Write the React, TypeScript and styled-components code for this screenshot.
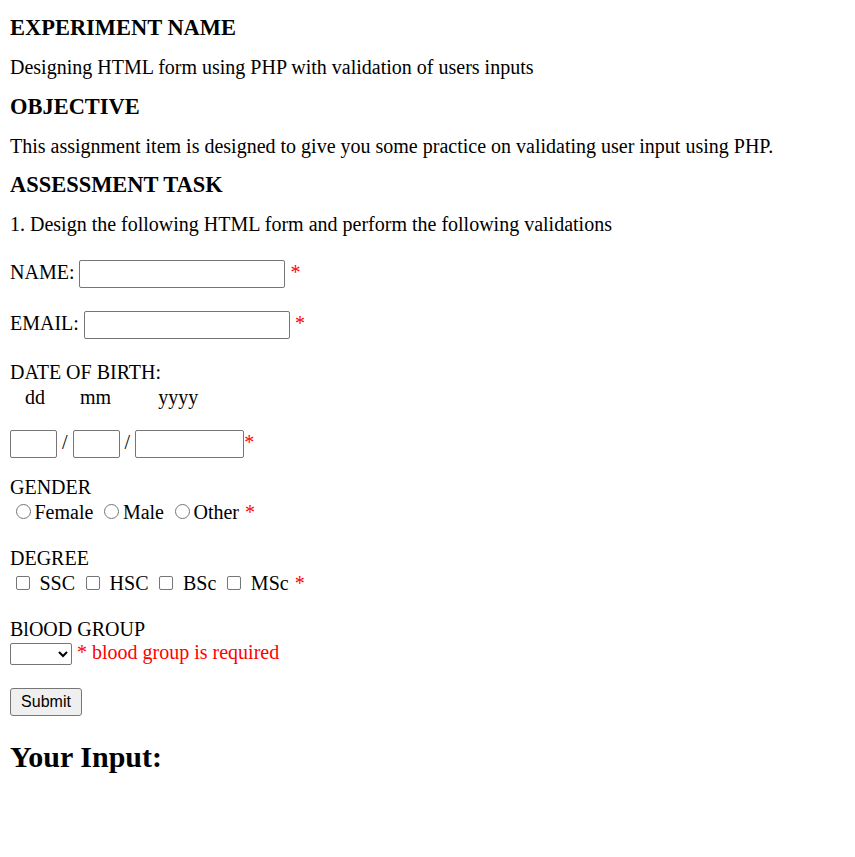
import React from "react";
import styled, { createGlobalStyle } from "styled-components";

const GlobalStyle = createGlobalStyle`
  html, body {
    margin: 0;
    padding: 0;
    background: #fff;
  }
  body {
    font-family: "Liberation Serif", "Times New Roman", serif;
    font-size: 20px;
    color: #000;
  }
`;

const Page = styled.main`
  padding: 15px 10px 40px;
`;

const SectionTitle = styled.h3`
  margin: 0 0 16px;
  font-size: 22.46px;
  line-height: 26px;
  font-weight: bold;
`;

const Para = styled.p`
  margin: 0 0 16.5px;
  line-height: 20px;
`;

const Form = styled.form`
  display: flex;
  flex-direction: column;
  align-items: flex-start;
  margin-top: -16.5px;
`;

const Row = styled.div<{ $mt: number }>`
  display: flex;
  align-items: baseline;
  margin-top: ${(p) => p.$mt}px;
  line-height: 22px;
  white-space: pre;
`;

const TextInput = styled.input<{ $w: number; $ml?: number }>`
  box-sizing: border-box;
  width: ${(p) => p.$w}px;
  height: 28px;
  margin: 0 0 0 ${(p) => p.$ml ?? 0}px;
  padding: 1px 3px;
  border: 1px solid #767676;
  border-radius: 2px;
  background: #fff;
  font-family: "Liberation Sans", Arial, sans-serif;
  font-size: 16px;
`;

const Hint = styled.span<{ $ml: number }>`
  margin-left: ${(p) => p.$ml}px;
`;

const Slash = styled.span`
  margin: 0 5px;
`;

const Required = styled.span<{ $ml?: number }>`
  color: #ff0000;
  margin-left: ${(p) => p.$ml ?? 5}px;
`;

const Radio = styled.input.attrs({ type: "radio" })`
  appearance: none;
  box-sizing: border-box;
  width: 15px;
  height: 15px;
  margin: 0 3.5px 0 6px;
  border: 1px solid #767676;
  border-radius: 50%;
  background: #fff;
`;

const Check = styled.input.attrs({ type: "checkbox" })`
  appearance: none;
  box-sizing: border-box;
  width: 14px;
  height: 14px;
  margin: 0 5px 0 5.5px;
  border: 1px solid #767676;
  border-radius: 2px;
  background: #fff;
`;

const OptionText = styled.span<{ $gap?: number }>`
  margin-left: ${(p) => p.$gap ?? 0}px;
  margin-right: 5px;
`;

const Select = styled.select`
  box-sizing: border-box;
  width: 62px;
  height: 22px;
  margin: 0;
  border: 1px solid #767676;
  border-radius: 2px;
  background: #fff;
  font-family: "Liberation Sans", Arial, sans-serif;
  font-size: 16px;
`;

const ErrorText = styled.span`
  color: #ff0000;
  margin-left: 5px;
`;

const SubmitButton = styled.button`
  box-sizing: border-box;
  width: 72px;
  height: 28px;
  margin-top: 23px;
  padding: 0;
  border: 1px solid #767676;
  border-radius: 3px;
  background: #efefef;
  color: #000;
  font-family: "Liberation Sans", Arial, sans-serif;
  font-size: 16px;
`;

const ResultTitle = styled.h2`
  margin: 24px 0 0;
  font-size: 30px;
  line-height: 34px;
  font-weight: bold;
`;

export default function App() {
  return (
    <>
      <GlobalStyle />
      <Page>
        <SectionTitle>EXPERIMENT NAME</SectionTitle>
        <Para>Designing HTML form using PHP with validation of users inputs</Para>
        <SectionTitle>OBJECTIVE</SectionTitle>
        <Para>This assignment item is designed to give you some practice on validating user input using PHP.</Para>
        <SectionTitle>ASSESSMENT TASK</SectionTitle>
        <Para>1. Design the following HTML form and perform the following validations</Para>

        <Form onSubmit={(e) => e.preventDefault()}>
          <Row $mt={26}>
            <span>NAME:</span>
            <TextInput type="text" name="name" $w={206} $ml={5} />
            <Required>*</Required>
          </Row>
          <Row $mt={23}>
            <span>EMAIL:</span>
            <TextInput type="text" name="email" $w={206} $ml={5} />
            <Required>*</Required>
          </Row>

          <Row $mt={22}>DATE OF BIRTH:</Row>
          <Row $mt={3}>
            <Hint $ml={15}>dd</Hint>
            <Hint $ml={35}>mm</Hint>
            <Hint $ml={47}>yyyy</Hint>
          </Row>
          <Row $mt={22}>
            <TextInput type="text" name="dd" $w={47} />
            <Slash>/</Slash>
            <TextInput type="text" name="mm" $w={47} />
            <Slash>/</Slash>
            <TextInput type="text" name="yyyy" $w={109} />
            <Required $ml={0}>*</Required>
          </Row>

          <Row $mt={18}>GENDER</Row>
          <Row $mt={3}>
            <Radio name="gender" value="female" />
            <OptionText>Female</OptionText>
            <Radio name="gender" value="male" />
            <OptionText>Male</OptionText>
            <Radio name="gender" value="other" />
            <OptionText>Other</OptionText>
            <Required $ml={1}>*</Required>
          </Row>

          <Row $mt={24}>DEGREE</Row>
          <Row $mt={3}>
            <Check name="ssc" />
            <OptionText $gap={5}>SSC</OptionText>
            <Check name="hsc" />
            <OptionText $gap={5}>HSC</OptionText>
            <Check name="bsc" />
            <OptionText $gap={5}>BSc</OptionText>
            <Check name="msc" />
            <OptionText $gap={5}>MSc</OptionText>
            <Required $ml={1}>*</Required>
          </Row>

          <Row $mt={24}>BlOOD GROUP</Row>
          <Row $mt={1}>
            <Select name="blood" defaultValue="">
              <option value=""></option>
              <option value="A+">A+</option>
              <option value="B+">B+</option>
              <option value="O+">O+</option>
              <option value="AB+">AB+</option>
            </Select>
            <ErrorText>* blood group is required</ErrorText>
          </Row>

          <SubmitButton type="submit">Submit</SubmitButton>
        </Form>

        <ResultTitle>Your Input:</ResultTitle>
      </Page>
    </>
  );
}
